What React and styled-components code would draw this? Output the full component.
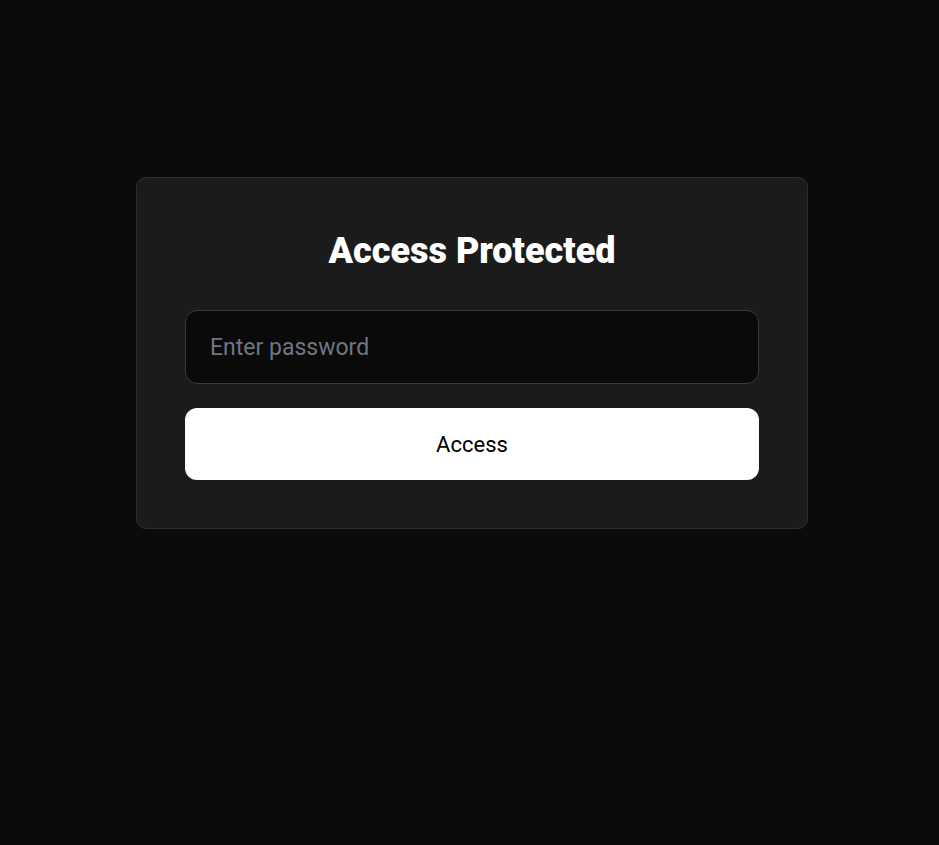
import React, { useState } from 'react';
import styled, { createGlobalStyle } from 'styled-components';

const GlobalStyle = createGlobalStyle`
  html, body {
    margin: 0;
    padding: 0;
    background: #0b0b0b;
  }
  body {
    font-family: Roboto, "Liberation Sans", sans-serif;
  }
  * {
    box-sizing: border-box;
  }
`;

const Page = styled.div`
  min-height: 845px;
  display: flex;
  justify-content: center;
  align-items: flex-start;
  padding: 177px 0 0 5px;
`;

const Card = styled.form`
  width: 672px;
  padding: 48px;
  background: #1b1b1b;
  border: 1px solid #2c2c2c;
  border-radius: 10px;
  display: flex;
  flex-direction: column;
`;

const Title = styled.h1`
  margin: 2px 0 36px;
  text-align: center;
  color: #fff;
  font-size: 36px;
  line-height: 46px;
  font-weight: 900;
`;

const Input = styled.input`
  height: 74px;
  padding: 0 24px;
  background: #0a0a0a;
  border: 1px solid #3a3a3a;
  border-radius: 12px;
  color: #fff;
  font-family: inherit;
  font-size: 23px;
  outline: none;
  margin-bottom: 24px;

  &::placeholder {
    color: #6e7684;
  }
`;

const Button = styled.button`
  height: 72px;
  border: none;
  border-radius: 12px;
  background: #fff;
  color: #000;
  font-family: inherit;
  font-size: 22px;
  cursor: pointer;
`;

const App = () => {
  const [password, setPassword] = useState('');

  return (
    <>
      <GlobalStyle />
      <Page>
        <Card onSubmit={e => e.preventDefault()}>
          <Title>Access Protected</Title>
          <Input
            type="password"
            placeholder="Enter password"
            value={password}
            onChange={e => setPassword(e.target.value)}
          />
          <Button type="submit">Access</Button>
        </Card>
      </Page>
    </>
  );
};

export default App;
